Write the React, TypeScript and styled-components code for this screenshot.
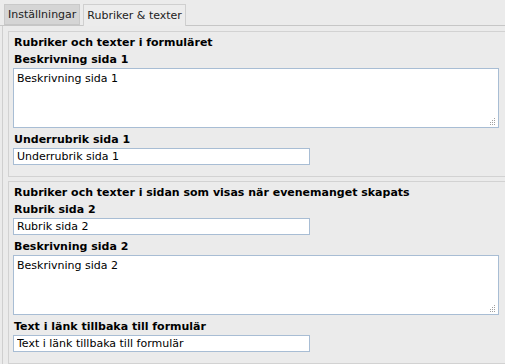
import React from "react";
import styled, { createGlobalStyle } from "styled-components";

const GlobalStyle = createGlobalStyle`
  html, body {
    margin: 0;
    padding: 0;
    background: #ebebeb;
  }
  body {
    font-family: "DejaVu Sans", Verdana, sans-serif;
    font-size: 11px;
    color: #000;
  }
`;

const Page = styled.div`
  width: 505px;
  height: 364px;
  overflow: hidden;
  background: #ebebeb;
`;

const TabBar = styled.div`
  display: flex;
  align-items: flex-end;
  gap: 3px;
  height: 26px;
  padding-left: 4px;
  border-bottom: 1px solid #c6c6c6;
  box-sizing: border-box;
`;

const Tab = styled.div<{ $active?: boolean }>`
  height: ${(p) => (p.$active ? "22px" : "21px")};
  margin-bottom: ${(p) => (p.$active ? "-1px" : "0")};
  padding: 0 3px;
  display: flex;
  align-items: center;
  box-sizing: border-box;
  font-size: 11px;
  color: #222;
  background: ${(p) => (p.$active ? "#ececec" : "#d5d5d5")};
  border: 1px solid ${(p) => (p.$active ? "#cfcfcf" : "#c9c9c9")};
  border-bottom: ${(p) => (p.$active ? "none" : "1px solid #c6c6c6")};
`;

const Panel = styled.div`
  margin-left: 2px;
  border-left: 1px solid #cfcfcf;
  padding: 5px 0 0 5px;
  display: flex;
  flex-direction: column;
  gap: 4px;
`;

const Section = styled.div`
  border: 1px solid #d2d2d2;
  border-right: none;
  padding: 2px 4px 8px 4px;
  margin-right: -4px;
  display: flex;
  flex-direction: column;
`;

const Title = styled.div`
  font-weight: bold;
  line-height: 17px;
  padding-left: 1px;
`;

const Label = styled.div`
  font-weight: bold;
  line-height: 17px;
  padding-left: 1px;
`;

const Field = styled.div`
  display: flex;
  flex-direction: column;
  margin-bottom: 3px;
`;

const Input = styled.input`
  width: 297px;
  height: 17px;
  box-sizing: border-box;
  border: 1px solid #a8bdd4;
  background: #fff;
  padding: 0 3px;
  font-family: "DejaVu Sans", Verdana, sans-serif;
  font-size: 11px;
  color: #000;
  outline: none;
`;

const AreaWrap = styled.div`
  position: relative;
  width: 486px;
  height: 60px;
`;

const TextArea = styled.textarea`
  width: 100%;
  height: 100%;
  box-sizing: border-box;
  border: 1px solid #a8bdd4;
  background: #fff;
  padding: 3px 3px;
  font-family: "DejaVu Sans", Verdana, sans-serif;
  font-size: 11px;
  line-height: 13px;
  color: #000;
  outline: none;
  resize: none;
  display: block;
`;

const Grip = styled.svg`
  position: absolute;
  right: 3px;
  bottom: 3px;
  width: 7px;
  height: 7px;
  pointer-events: none;
`;

const GripDots = () => (
  <Grip viewBox="0 0 7 7">
    {[
      [5, 0],
      [3, 2],
      [5, 2],
      [1, 4],
      [3, 4],
      [5, 4],
      [1, 6],
      [3, 6],
      [5, 6],
    ].map(([x, y]) => (
      <rect key={`${x}-${y}`} x={x} y={y} width="1" height="1" fill="#a0a0a0" />
    ))}
  </Grip>
);

const TextRow = ({ label, value }: { label: string; value: string }) => (
  <Field>
    <Label>{label}</Label>
    <Input defaultValue={value} />
  </Field>
);

const AreaRow = ({ label, value }: { label: string; value: string }) => (
  <Field>
    <Label>{label}</Label>
    <AreaWrap>
      <TextArea defaultValue={value} />
      <GripDots />
    </AreaWrap>
  </Field>
);

export default function App() {
  return (
    <Page>
      <GlobalStyle />
      <TabBar>
        <Tab>Inställningar</Tab>
        <Tab $active>Rubriker &amp; texter</Tab>
      </TabBar>
      <Panel>
        <Section>
          <Title>Rubriker och texter i formuläret</Title>
          <AreaRow label="Beskrivning sida 1" value="Beskrivning sida 1" />
          <TextRow label="Underrubrik sida 1" value="Underrubrik sida 1" />
        </Section>
        <Section>
          <Title>Rubriker och texter i sidan som visas när evenemanget skapats</Title>
          <TextRow label="Rubrik sida 2" value="Rubrik sida 2" />
          <AreaRow label="Beskrivning sida 2" value="Beskrivning sida 2" />
          <TextRow
            label="Text i länk tillbaka till formulär"
            value="Text i länk tillbaka till formulär"
          />
        </Section>
      </Panel>
    </Page>
  );
}
